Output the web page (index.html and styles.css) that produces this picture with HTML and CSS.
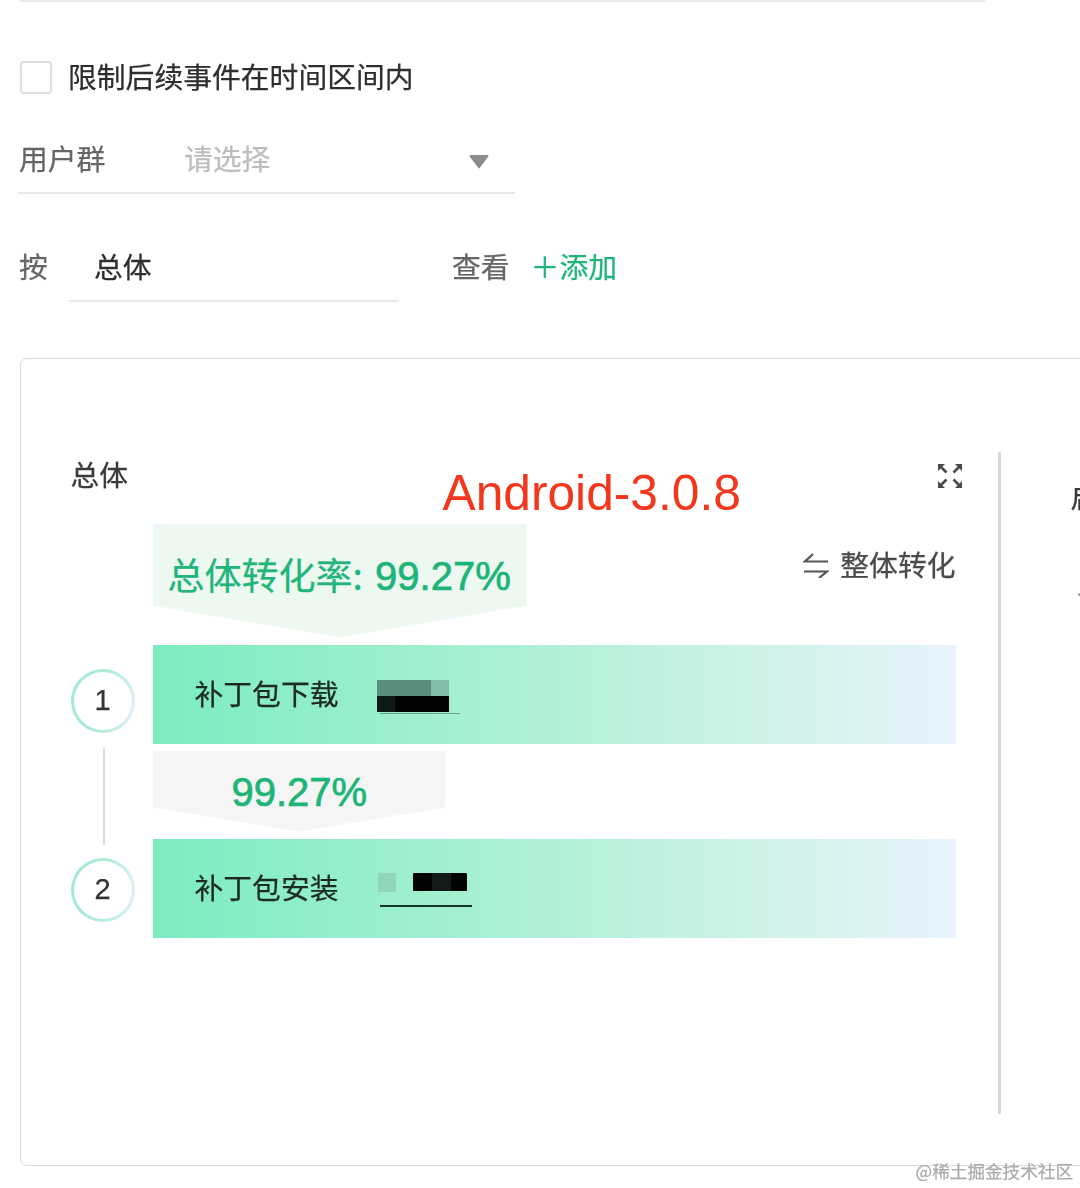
FILE: index.html
```html
<!DOCTYPE html>
<html lang="zh-CN">
<head>
<meta charset="utf-8">
<title>漏斗分析</title>
<link rel="stylesheet" href="styles.css">
</head>
<body>
<main class="page">
  <div class="top-rule"></div>

  <label class="check-row">
    <span class="checkbox"></span>
    <span class="check-label">限制后续事件在时间区间内</span>
  </label>

  <div class="group-row">
    <span class="field-label group-label">用户群</span>
    <span class="placeholder">请选择</span>
    <svg class="caret" viewBox="0 0 20 15" aria-hidden="true"><path d="M1.5 1h17a1 1 0 0 1 .8 1.600l-8.400 11.200a1 1 0 0 1-1.700 0L.7 2.600A1 1 0 0 1 1.500 1z"/></svg>
  </div>

  <div class="by-row">
    <span class="field-label by-label">按</span>
    <span class="by-select">总体</span>
    <span class="field-label view-label">查看</span>
    <span class="add-link">＋添加</span>
  </div>

  <section class="card">
    <div class="chart">
      <div class="chart-head">
        <span class="chart-title">总体</span>
        <svg class="expand" viewBox="0 0 24 24" aria-hidden="true">
          <path class="expand-line" d="M3 3l5.500 5.500M21 3l-5.500 5.500M3 21l5.500-5.500M21 21l-5.500-5.500"/>
          <path class="expand-tip" d="M0 0h7L0 7zM24 0v7l-7-7zM0 24v-7l7 7zM24 24h-7l7-7z"/>
        </svg>
      </div>
      <span class="version-note">Android-3.0.8</span>
      <div class="funnel">
        <div class="rail">
          <span class="step">1</span>
          <span class="rail-line"></span>
          <span class="step">2</span>
        </div>
        <div class="stages">
          <div class="total-row">
            <div class="total-banner">总体转化率: <b class="rate total-rate">99.27%</b></div>
            <div class="mode-toggle">
              <svg class="swap" viewBox="0 0 26 26" aria-hidden="true"><path d="M10 2L2 9.500h23M1 19.500h23L16 26"/></svg>
              <span>整体转化</span>
            </div>
          </div>
          <div class="stage">
            <span class="stage-name">补丁包下载</span>
            <div class="mask mask-one">
              <div class="mask-top"></div>
              <div class="mask-bottom"></div>
              <div class="mask-line"></div>
            </div>
          </div>
          <div class="step-rate"><b class="rate">99.27%</b></div>
          <div class="stage">
            <span class="stage-name">补丁包安装</span>
            <div class="mask mask-two">
              <div class="mask-blocks">
                <div class="mask-square"></div>
                <div class="mask-bar"></div>
              </div>
              <div class="mask-rule"></div>
            </div>
          </div>
        </div>
      </div>
    </div>
    <div class="divider"></div>
    <div class="next-chart">
      <div class="next-title">启动</div>
      <div class="next-dot"></div>
    </div>
  </section>

  <div class="watermark">@稀土掘金技术社区</div>
</main>
</body>
</html>
```

FILE: styles.css
```css
* { box-sizing: border-box; }

html, body {
  margin: 0;
  padding: 0;
  background: #fff;
}

body {
  width: 1080px;
  height: 1188px;
  overflow: hidden;
  font-family: "Noto Sans CJK SC", "Liberation Sans", sans-serif;
  font-size: 28.8px;
  color: #2e2e2e;
  -webkit-text-stroke: 0.25px;
}

.page {
  position: relative;
  width: 1080px;
  height: 1188px;
  padding-left: 19px;
  overflow: hidden;
  filter: blur(0.5px);
}

.top-rule {
  width: 965px;
  height: 2px;
  margin-left: 1px;
  background: #e8e8e8;
}

.check-row {
  display: flex;
  align-items: center;
  height: 33px;
  margin: 59px 0 0 1px;
}

.checkbox {
  width: 32px;
  height: 33px;
  border: 2px solid #dedede;
  border-radius: 4px;
}

.check-label {
  margin: 0 0 4px 16px;
  line-height: 33px;
}

.field-label { color: #666; }

.group-row {
  display: flex;
  align-items: center;
  width: 497px;
  height: 54px;
  margin: 46px 0 0 -1px;
  padding: 0 26px 17px 1px;
  border-bottom: 2px solid #e6e6e6;
  line-height: 40px;
}

.group-label { width: 165px; }

.placeholder {
  flex: 1;
  color: #bdbdbd;
}

.caret {
  width: 20px;
  height: 15px;
  margin-top: 7px;
  fill: #8c8c8c;
}

.by-row {
  display: flex;
  align-items: flex-start;
  margin-top: 53px;
  line-height: 38px;
}

.by-label { width: 50px; }

.by-select {
  width: 330px;
  height: 55px;
  padding-left: 25px;
  border-bottom: 2px solid #e8e8e8;
  color: #2e2e2e;
}

.view-label { margin-left: 53px; }

.add-link {
  margin-left: 21px;
  color: #1fb57b;
}

.card {
  display: flex;
  align-items: flex-start;
  width: 1100px;
  height: 808px;
  margin: 56px 0 0 1px;
  border: 1.5px solid #dadada;
  border-radius: 7px;
}

.chart {
  position: relative;
  flex: none;
  width: 940.500px;
  margin-top: 98.500px;
  padding-left: 49.500px;
}

.chart-head {
  display: flex;
  justify-content: space-between;
  align-items: center;
  height: 32px;
}

.chart-title {
  line-height: 32px;
  color: #3a3a3a;
}

.expand {
  width: 24px;
  height: 24px;
  margin-top: 4px;
  overflow: visible;
}

.expand-line {
  fill: none;
  stroke: #4a4a4a;
  stroke-width: 2.600;
}

.expand-tip { fill: #4a4a4a; }

.version-note {
  position: absolute;
  left: 421.500px;
  top: 5px;
  font-family: "Liberation Sans", sans-serif;
  font-size: 49.700px;
  line-height: 60px;
  color: #f2371c;
  -webkit-text-stroke: 0;
}

.funnel {
  display: flex;
  margin-top: 34px;
}

.rail {
  display: flex;
  flex-direction: column;
  align-items: center;
  width: 64px;
  padding-top: 145px;
}

.step {
  display: flex;
  align-items: center;
  justify-content: center;
  width: 64px;
  height: 64px;
  border: 3.500px solid transparent;
  border-radius: 50%;
  background:
    linear-gradient(#fff, #fff) padding-box,
    linear-gradient(100deg, #9eeacd 0%, #b2edd8 55%, #e3f0fa 100%) border-box;
  font-family: "Liberation Sans", sans-serif;
  font-size: 29px;
  color: #333;
}

.rail-line {
  width: 2px;
  height: 97px;
  margin: 15px 0 13px 2px;
  background: #dcdcdc;
}

.stages {
  width: 803px;
  margin-left: 18px;
}

.total-row {
  display: flex;
  justify-content: space-between;
  height: 114px;
}

.total-banner {
  width: 374px;
  height: 114px;
  padding: 25px 0 0 15px;
  background: #edf8f1;
  clip-path: polygon(0 0, 100% 0, 100% 72%, 50% 100%, 0 72%);
  font-size: 37px;
  line-height: 50px;
  color: #1fb57b;
  white-space: nowrap;
}

.rate {
  font-family: "Liberation Sans", sans-serif;
  font-size: 40px;
  font-weight: 400;
  color: #1cb578;
  -webkit-text-stroke: 0.7px #1cb578;
}

.total-rate { margin-left: 4px; }

.mode-toggle {
  display: flex;
  align-items: center;
  height: 40px;
  margin-top: 20px;
  color: #4a4a4a;
}

.swap {
  width: 26px;
  height: 26px;
  margin: 2px 11px 0 0;
  fill: none;
  stroke: #555;
  stroke-width: 2.200;
}

.stage {
  display: flex;
  align-items: flex-start;
  height: 99px;
  margin-top: 7px;
  padding-left: 42px;
  background: linear-gradient(90deg, #7cecbf 0%, #a6f0d2 40%, #c8f2e3 70%, #e8f3fe 100%);
}

.stage-name {
  width: 182px;
  padding-top: 28px;
  line-height: 40px;
  color: #1d2b26;
}

.mask { width: 95px; }

.mask-one { margin-top: 35px; }

.mask-top {
  width: 72px;
  height: 16px;
  background: linear-gradient(90deg, #5a8f7e 0 75%, #84bda8 75% 100%);
}

.mask-bottom {
  width: 72px;
  height: 16px;
  background: linear-gradient(90deg, #0d1a16 0 25%, #020404 25% 100%);
}

.mask-line {
  width: 80px;
  height: 1px;
  margin: 1px 0 0 3px;
  background: #6a9a8b;
}

.mask-two { margin-top: 34px; }

.mask-blocks {
  display: flex;
  gap: 17px;
  margin-left: 1px;
}

.mask-square {
  width: 18px;
  height: 19px;
  background: #90d6ba;
}

.mask-bar {
  width: 54px;
  height: 18px;
  border-radius: 1px;
  background: linear-gradient(90deg, #020404 0 35%, #111c18 35% 70%, #020404 70% 100%);
}

.mask-rule {
  width: 92px;
  height: 2px;
  margin: 13px 0 0 3px;
  background: #14352b;
}

.step-rate {
  width: 293px;
  height: 81px;
  margin-top: 7px;
  padding-left: 79px;
  background: #f5f5f5;
  clip-path: polygon(0 0, 100% 0, 100% 70%, 50% 100%, 0 70%);
  line-height: 82px;
  white-space: nowrap;
}

.divider {
  flex: none;
  width: 3px;
  height: 662px;
  margin: 92.500px 0 0 36px;
  background: #d9d9d9;
}

.next-chart {
  flex: none;
  margin: 118.500px 0 0 70px;
}

.next-title {
  line-height: 36px;
  color: #3a3a3a;
  white-space: nowrap;
}

.next-dot {
  width: 3px;
  height: 3px;
  margin: 79px 0 0 7px;
  background: #aaa;
}

.watermark {
  position: absolute;
  right: 7px;
  top: 1158px;
  font-size: 17.600px;
  line-height: 26px;
  color: #ababab;
  white-space: nowrap;
}
```
